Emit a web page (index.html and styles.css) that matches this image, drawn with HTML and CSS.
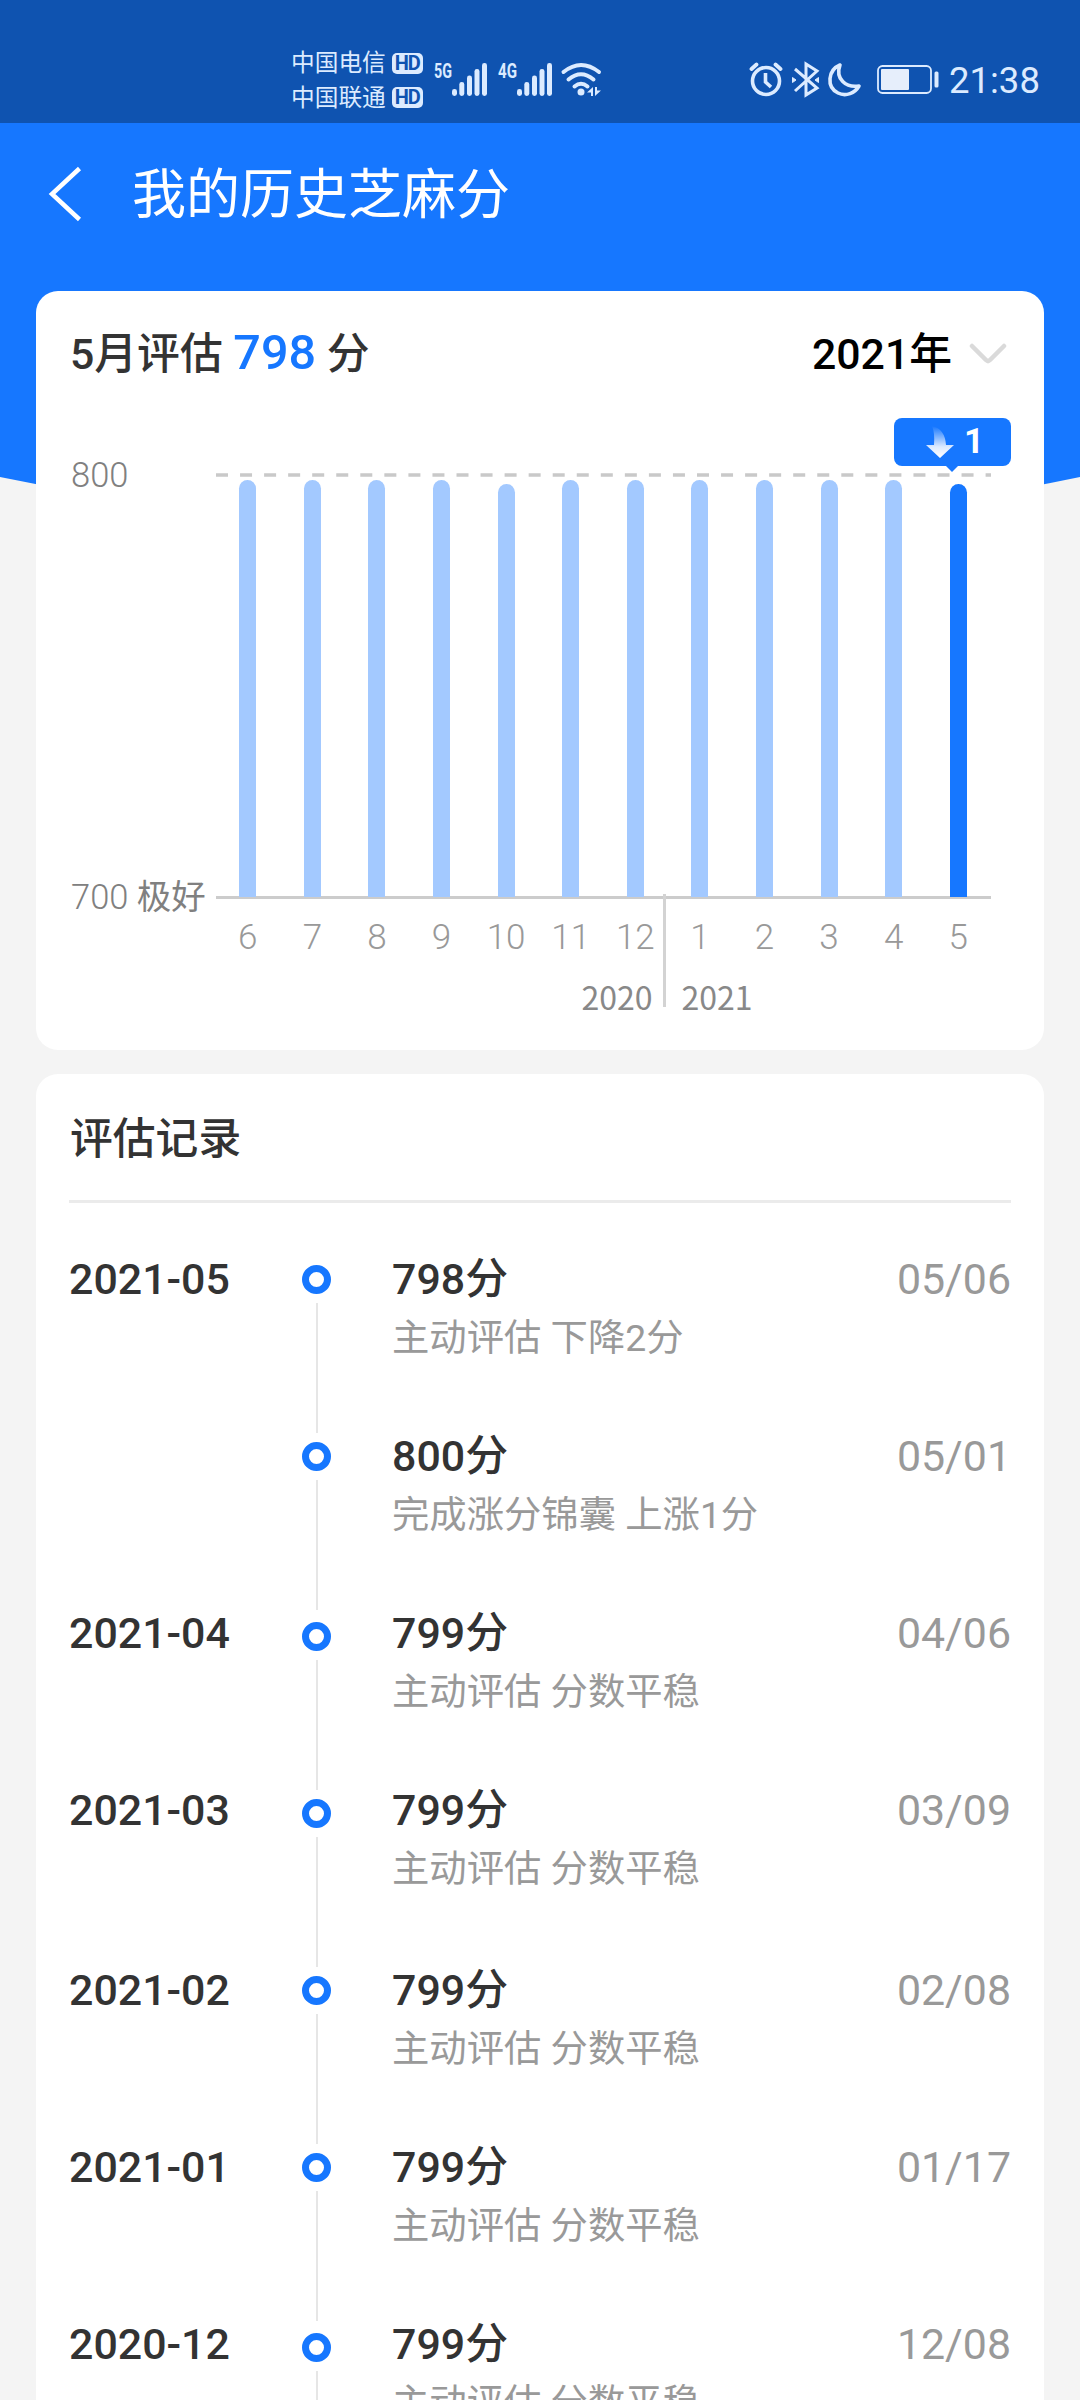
FILE: index.html
```html
<!DOCTYPE html>
<html lang="zh-CN">
<head>
<meta charset="utf-8">
<title>我的历史芝麻分</title>
<link rel="stylesheet" href="styles.css">
</head>
<body>
<div class="screen">
  <svg class="backdrop" width="1080" height="500" viewBox="0 0 1080 500"><path d="M0 0H1080V477Q540 590 0 477Z" fill="#1677ff"/></svg>
  <header class="status">
    <div class="carriers">
      <div class="carrier">中国电信<span class="hd">HD</span></div>
      <div class="carrier">中国联通<span class="hd">HD</span></div>
    </div>
    <svg class="signals" width="180" height="50" viewBox="0 0 180 50" fill="#dcebff">
      <text class="net" x="0" y="23" textLength="18" lengthAdjust="spacingAndGlyphs">5G</text>
      <g id="sig"><rect x="18" y="34" width="5" height="7" rx="2.4"/><rect x="25.3" y="27" width="5" height="14" rx="2.4"/><rect x="33" y="20.500" width="5" height="20.500" rx="2.400"/><rect x="40.500" y="14" width="5" height="27" rx="2.400"/><rect x="48" y="8" width="5" height="33" rx="2.400"/></g>
      <text class="net" x="64" y="23" textLength="19" lengthAdjust="spacingAndGlyphs">4G</text>
      <use href="#sig" x="65"/>
      <g fill="none" stroke="#dcebff" stroke-width="4" stroke-linecap="round"><path d="M129.500 17Q147 3 165 17M134.500 24.500Q147 14 159.500 24.500M140.500 31.500Q147 26 153.500 31.500"/></g>
      <circle cx="147" cy="37" r="3.500"/><path d="M153 37.500L159 32V41H157V37.500ZM161 32H163V35.500H167L161 41Z"/>
    </svg>
    <svg class="indicators" width="192" height="40" viewBox="0 0 192 40" fill="none" stroke="#dcebff">
      <circle cx="17" cy="21" r="13.500" stroke-width="3.600"/><path d="M16.500 13V22L22 27" stroke-width="3.600"/><path d="M2.500 9L7.500 4.500M26.500 4.500L31.500 9" stroke-width="3.800" stroke-linecap="round"/>
      <path d="M46 9L68 28L57 35V4L68 11L46 31" stroke-width="3"/><path d="M43.500 17.500L47 20L43.500 22.500ZM69.500 17.500L66 20L69.500 22.500Z" fill="#dcebff" stroke-width="1"/>
      <path d="M91 5C79 10 77 27 89 33C97 37 106 33 110 26C97 28 86 19 91 5Z" stroke-width="3.600" stroke-linejoin="round"/>
      <rect x="129" y="6" width="53" height="27" rx="4.500" stroke-width="1.800"/><rect x="132" y="9" width="28" height="21" rx="1" fill="#e6eefb" stroke="none"/><rect x="185.500" y="11.500" width="4" height="16" rx="1.500" fill="#dcebff" stroke="none"/>
    </svg>
    <div class="clock">21:38</div>
  </header>
  <nav class="nav">
    <svg width="34" height="56" viewBox="0 0 34 56" fill="none" stroke="#fff" stroke-width="4.500"><path d="M31.500 2.500L4 28L31.500 53.500"/></svg>
    <h1>我的历史芝麻分</h1>
  </nav>
  <main>
    <section class="card summary">
      <div class="summary-head">
        <div class="current">5月评估 <b>798</b> 分</div>
        <div class="year">2021年<svg width="38" height="22" viewBox="0 0 38 22" fill="none" stroke="#dadada" stroke-width="4.500" stroke-linecap="round" stroke-linejoin="round"><path d="M3 3L17 17Q19 19 21 17L35 3"/></svg></div>
      </div>
      <div class="chart">
        <div class="y-axis"><span>800</span><span>700 <em>极好</em></span></div>
        <div class="plot">
          <svg class="limit" width="775" height="4"><path d="M0 2H775" stroke="#c9c9c9" stroke-width="3.400" stroke-dasharray="12 12.050"/></svg>
          <div class="bars">
            <i></i><i></i><i></i><i></i><i class="low"></i><i></i><i></i><i></i><i></i><i></i><i></i><i class="low now"></i>
          </div>
          <div class="months"><span>6</span><span>7</span><span>8</span><span>9</span><span>10</span><span>11</span><span>12</span><span>1</span><span>2</span><span>3</span><span>4</span><span>5</span></div>
          <div class="years"><span>2020</span><span>2021</span></div>
          <div class="year-split"></div>
          <div class="tip">
            <svg width="30" height="34" viewBox="0 0 30 34"><defs><linearGradient id="fade" x1="0" y1="0" x2="0" y2="1"><stop offset="0" stop-color="#fff" stop-opacity="0"/><stop offset=".65" stop-color="#fff" stop-opacity=".85"/><stop offset="1" stop-color="#fff"/></linearGradient></defs><path d="M7 1Q20 4 21 20H29L15 33L1 20H9Q10 8 7 1Z" fill="url(#fade)"/></svg><span>1</span>
          </div>
        </div>
      </div>
    </section>
    <section class="card records">
      <h2>评估记录</h2>
      <ol>
        <li><time>2021-05</time><span class="dot"></span><div class="entry"><strong>798分</strong><p>主动评估 下降2分</p></div><span class="day">05/06</span></li>
        <li><time></time><span class="dot"></span><div class="entry"><strong>800分</strong><p>完成涨分锦囊 上涨1分</p></div><span class="day">05/01</span></li>
        <li class="shift"><time>2021-04</time><span class="dot"></span><div class="entry"><strong>799分</strong><p>主动评估 分数平稳</p></div><span class="day">04/06</span></li>
        <li class="shift tall"><time>2021-03</time><span class="dot"></span><div class="entry"><strong>799分</strong><p>主动评估 分数平稳</p></div><span class="day">03/09</span></li>
        <li><time>2021-02</time><span class="dot"></span><div class="entry"><strong>799分</strong><p>主动评估 分数平稳</p></div><span class="day">02/08</span></li>
        <li><time>2021-01</time><span class="dot"></span><div class="entry"><strong>799分</strong><p>主动评估 分数平稳</p></div><span class="day">01/17</span></li>
        <li class="shift"><time>2020-12</time><span class="dot"></span><div class="entry"><strong>799分</strong><p>主动评估 分数平稳</p></div><span class="day">12/08</span></li>
      </ol>
    </section>
  </main>
</div>
</body>
</html>
```
FILE: styles.css
```css
* { box-sizing: border-box; margin: 0; padding: 0; }
body { width: 1080px; background: #f4f4f4; font-family: Roboto, "Noto Sans CJK SC", sans-serif; color: #333; }
.screen { position: relative; width: 1080px; height: 2400px; overflow: hidden; display: flex; flex-direction: column; }
.backdrop { position: absolute; top: 0; left: 0; }
.status, .nav, main { position: relative; flex: none; }

.status { height: 123px; background: #0f53b0; color: #dcebff; display: flex; align-items: flex-start; padding-left: 291px; }
.carriers { width: 143px; padding-top: 46px; }
.carrier { display: flex; align-items: center; gap: 6px; height: 34.500px; font-size: 23.700px; line-height: 34px; white-space: nowrap; }
.hd { width: 31px; height: 21px; border-radius: 5px; background: #dcebff; color: #0f53b0; font-size: 20px; font-weight: 700; line-height: 21px; text-align: center; letter-spacing: -1px; }
.signals { margin-top: 55px; }
.net { font: 700 21px Roboto, sans-serif; }
.indicators { margin: 60px 0 0 135px; }
.clock { margin-left: 8px; padding-top: 58px; font-size: 36.500px; line-height: 46px; }

.nav { height: 168px; display: flex; align-items: flex-start; padding: 43px 0 0 48px; color: #fff; }
.nav h1 { margin: 2px 0 0 50px; font-size: 54px; line-height: 56px; font-weight: 400; }

main { padding: 0 36px; display: flex; flex-direction: column; gap: 24px; }
.card { background: #fff; border-radius: 22px; padding: 0 33px; }
.summary { height: 759px; }
.summary-head { height: 127px; padding: 33px 4px 0 1px; display: flex; align-items: flex-start; justify-content: space-between; font-size: 42.800px; line-height: 60px; font-weight: 500; }
.current b { color: #1677ff; font-size: 48.500px; font-weight: 500; line-height: 58px; }
.year { display: flex; align-items: center; gap: 17px; color: #000; }
.chart { display: flex; height: 632px; }
.y-axis { width: 146.500px; padding: 37px 0 0 2px; display: flex; flex-direction: column; gap: 382px; font-size: 34.500px; line-height: 40px; font-weight: 300; color: #808080; white-space: nowrap; }
.y-axis em { font-style: normal; font-weight: 400; }
.plot { position: relative; width: 775px; padding-top: 55px; }
.limit { display: block; }
.bars { height: 422px; border-bottom: 3px solid #ccc; display: grid; grid-template-columns: repeat(12, 1fr); align-items: end; justify-items: center; }
.bars i { width: 17px; height: 417px; margin-bottom: -1px; border-radius: 8.500px 8.500px 0 0; background: #a3c9ff; }
.bars .low { height: 413px; }
.bars .now { background: #1677ff; }
.months { display: grid; grid-template-columns: repeat(12, 1fr); margin-top: 19px; text-align: center; font-size: 35px; line-height: 40px; font-weight: 300; color: #999; }
.years { display: flex; gap: 29px; margin-top: 16px; padding-left: 366px; font: 32px/44px "Noto Sans CJK SC", sans-serif; color: #888; }
.year-split { position: absolute; left: 447.500px; top: 476px; width: 3px; height: 113px; background: #d3d3d3; }
.tip { position: absolute; left: 678.500px; top: 0; width: 117px; height: 47.500px; border-radius: 8px; background: #1677ff; color: #fff; display: flex; align-items: center; padding-left: 31px; gap: 9px; font-size: 35px; font-weight: 700; }
.tip::after { content: ""; position: absolute; left: 51px; top: 47px; border: 7.500px solid transparent; border-top: 7px solid #1677ff; border-bottom: 0; }

.records { height: 1400px; }
.records h2 { height: 129px; padding: 37px 1px 0; border-bottom: 3px solid #ebebeb; font-size: 42.800px; line-height: 56px; font-weight: 500; }
.records ol { list-style: none; padding-top: 51px; }
.records li { display: grid; grid-template-columns: 233px 90px 1fr auto; height: 177px; font-size: 42.900px; line-height: 50px; }
.records time, .records strong { font-weight: 500; }
.records p { font-size: 37.350px; line-height: 50px; margin-top: 9px; color: #999; }
.day { color: #999; }
.dot { position: relative; width: 29px; height: 29px; margin-top: 11px; border: 7.500px solid #1677ff; border-radius: 50%; }
.dot::after { content: ""; position: absolute; left: 7px; top: 30.500px; width: 2px; height: 130px; background: #e6e6e6; }
.shift .dot { top: 3px; }
.records .tall { height: 180px; }
```
